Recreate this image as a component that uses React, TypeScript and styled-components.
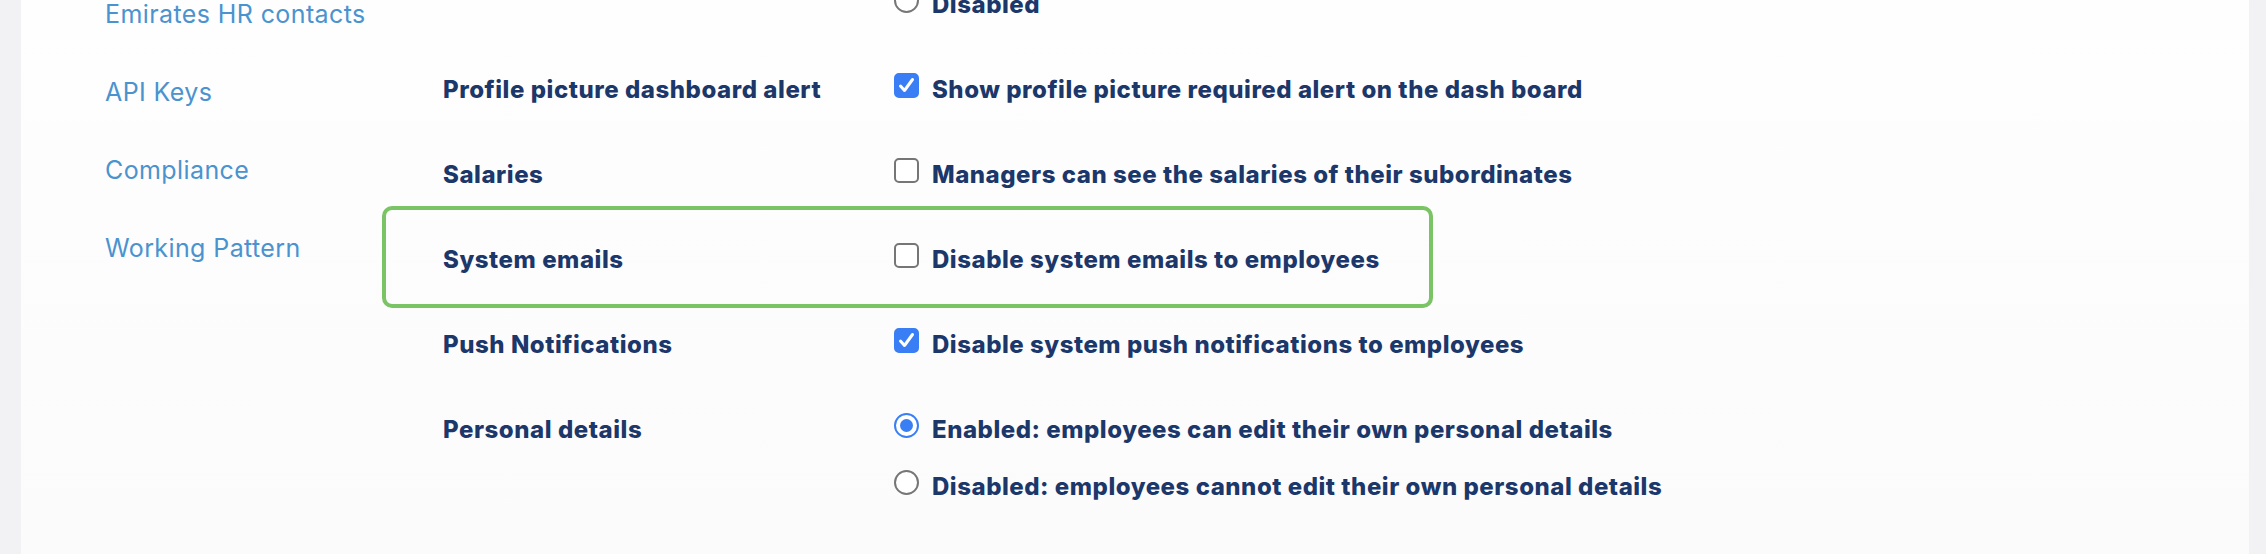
import React from "react";
import styled, { createGlobalStyle, css } from "styled-components";

const GlobalStyle = createGlobalStyle`
  html, body {
    margin: 0;
    padding: 0;
    background: #f2f2f4;
    overflow: hidden;
  }
  body {
    font-family: Inter, Lato, "Liberation Sans", sans-serif;
  }
`;

const Page = styled.div`
  height: 554px;
  overflow: hidden;
  display: flex;
  padding: 0 17px 0 21px;
`;

const Panel = styled.main`
  flex: 1;
  display: flex;
  padding-left: 84px;
  background: linear-gradient(#fefefe, #fbfbfc);
  overflow: hidden;
`;

const Nav = styled.nav`
  flex: none;
  width: 338px;
  display: flex;
  flex-direction: column;
  margin-top: -25px;
`;

const NavLink = styled.a`
  font-size: 25px;
  line-height: 78px;
  font-weight: 400;
  letter-spacing: 0.4px;
  color: #4a93cf;
  text-decoration: none;
  white-space: nowrap;
`;

const Settings = styled.section`
  flex: 1;
  display: flex;
  flex-direction: column;
  margin-top: -38px;
`;

const Row = styled.div<{ $highlight?: boolean }>`
  position: relative;
  display: grid;
  grid-template-columns: 451px 1fr;
  padding: 26px 0 25px;
  ${(p) =>
    p.$highlight &&
    css`
      &::after {
        content: "";
        position: absolute;
        left: -61px;
        width: 1051px;
        top: -11px;
        bottom: -6px;
        box-sizing: border-box;
        border: 4px solid #7bc466;
        border-radius: 10px;
        pointer-events: none;
      }
    `}
`;

const Label = styled.div`
  font-size: 24px;
  line-height: 34px;
  font-weight: 800;
  letter-spacing: 0.55px;
  color: #1c376a;
  white-space: nowrap;
`;

const Options = styled.div`
  display: flex;
  flex-direction: column;
  gap: 23px;
`;

const Option = styled.label`
  display: flex;
  align-items: flex-start;
  gap: 13px;
  font-size: 24px;
  line-height: 34px;
  font-weight: 800;
  letter-spacing: 0.53px;
  color: #1c376a;
  white-space: nowrap;
`;

const CheckBox = styled.span<{ $checked?: boolean }>`
  flex: none;
  width: 25px;
  height: 25px;
  box-sizing: border-box;
  border-radius: 5px;
  border: 2px solid ${(p) => (p.$checked ? "#3a7ef5" : "#767676")};
  background: ${(p) => (p.$checked ? "#3a7ef5" : "#ffffff")};
  display: flex;
  align-items: center;
  justify-content: center;
`;

const RadioCircle = styled.span<{ $checked?: boolean }>`
  flex: none;
  width: 25px;
  height: 25px;
  box-sizing: border-box;
  border-radius: 50%;
  border: ${(p) => (p.$checked ? "2.5px solid #3a7ef5" : "2px solid #767676")};
  background: #ffffff;
  display: flex;
  align-items: center;
  justify-content: center;
  &::after {
    content: "";
    width: 13px;
    height: 13px;
    border-radius: 50%;
    background: #3a7ef5;
    display: ${(p) => (p.$checked ? "block" : "none")};
  }
`;

type Opt = { text: string; checked?: boolean };
type Setting = {
  label: string;
  kind: "checkbox" | "radio";
  options: Opt[];
  highlight?: boolean;
};

const settings: Setting[] = [
  {
    label: "",
    kind: "radio",
    options: [{ text: "Disabled" }],
  },
  {
    label: "Profile picture dashboard alert",
    kind: "checkbox",
    options: [{ text: "Show profile picture required alert on the dash board", checked: true }],
  },
  {
    label: "Salaries",
    kind: "checkbox",
    options: [{ text: "Managers can see the salaries of their subordinates" }],
  },
  {
    label: "System emails",
    kind: "checkbox",
    highlight: true,
    options: [{ text: "Disable system emails to employees" }],
  },
  {
    label: "Push Notifications",
    kind: "checkbox",
    options: [{ text: "Disable system push notifications to employees", checked: true }],
  },
  {
    label: "Personal details",
    kind: "radio",
    options: [
      { text: "Enabled: employees can edit their own personal details", checked: true },
      { text: "Disabled: employees cannot edit their own personal details" },
    ],
  },
  {
    label: "",
    kind: "radio",
    options: [{ text: "", checked: true }],
  },
];

const navItems = ["Emirates HR contacts", "API Keys", "Compliance", "Working Pattern"];

const CheckMark = () => (
  <svg width="19" height="19" viewBox="0 0 19 19" fill="none">
    <path d="M3.5 10 L7.5 14.5 L15.5 3.5" stroke="#ffffff" strokeWidth="3" strokeLinecap="round" strokeLinejoin="round" />
  </svg>
);

export default function App() {
  return (
    <>
      <GlobalStyle />
      <Page>
        <Panel>
          <Nav>
            {navItems.map((n) => (
              <NavLink key={n} href="#">
                {n}
              </NavLink>
            ))}
          </Nav>
          <Settings>
            {settings.map((s, i) => (
              <Row key={i} $highlight={s.highlight}>
                <Label>{s.label}</Label>
                <Options>
                  {s.options.map((o, j) => (
                    <Option key={j}>
                      {s.kind === "checkbox" ? (
                        <CheckBox $checked={o.checked}>{o.checked && <CheckMark />}</CheckBox>
                      ) : (
                        <RadioCircle $checked={o.checked} />
                      )}
                      {o.text && <span>{o.text}</span>}
                    </Option>
                  ))}
                </Options>
              </Row>
            ))}
          </Settings>
        </Panel>
      </Page>
    </>
  );
}
